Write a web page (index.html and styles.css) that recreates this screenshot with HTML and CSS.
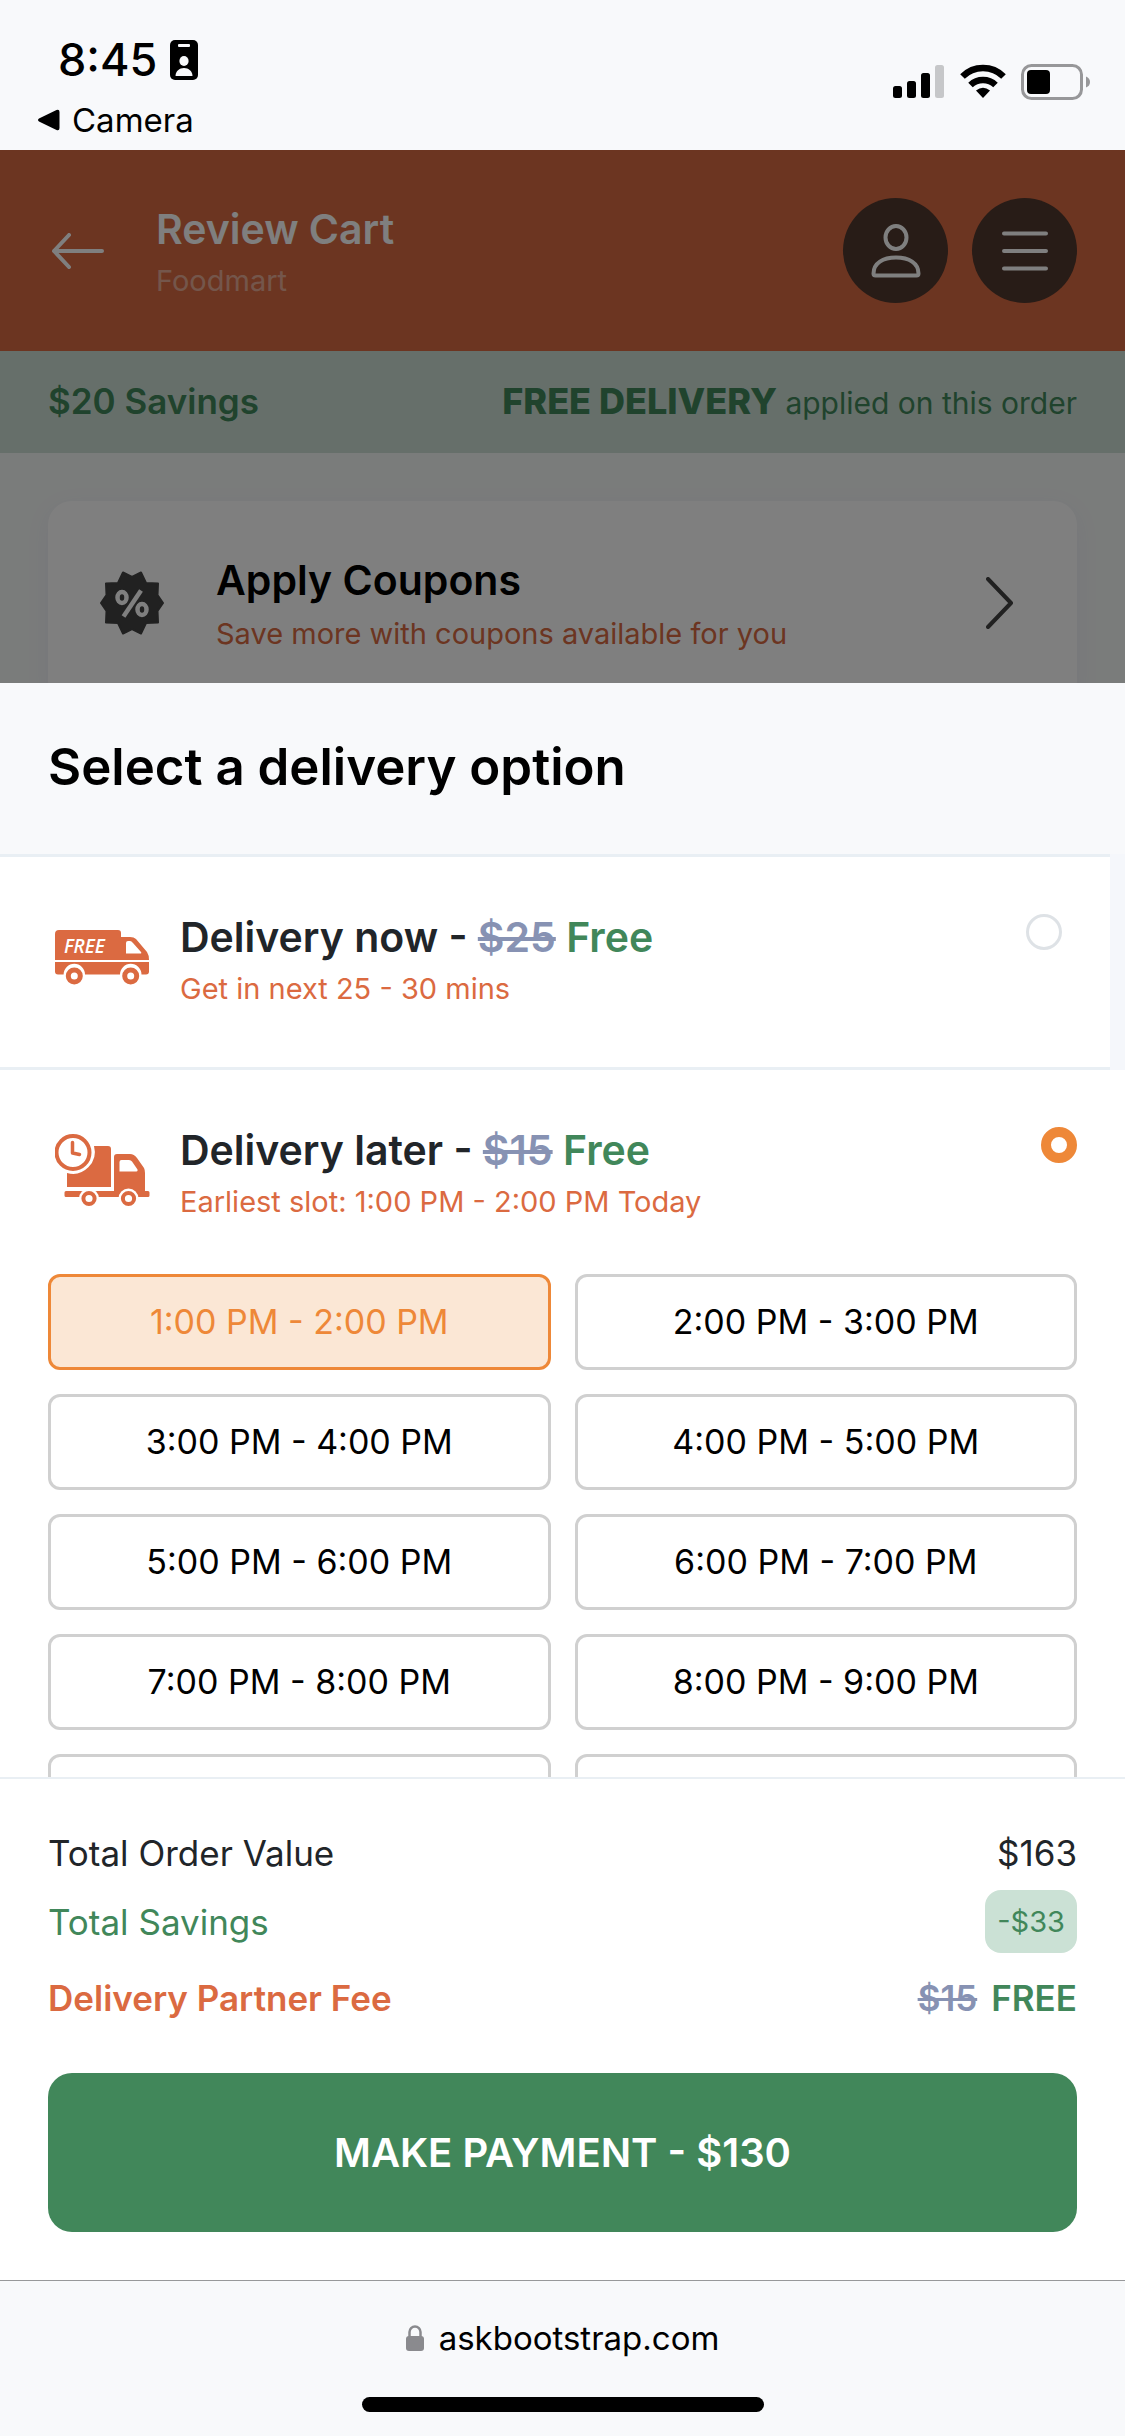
FILE: index.html
```html
<!DOCTYPE html>
<html lang="en">
<head>
<meta charset="utf-8">
<meta name="viewport" content="width=device-width, initial-scale=1">
<title>Review Cart</title>
<link rel="stylesheet" href="styles.css">
</head>
<body>
<div class="screen">
  <div class="status">
    <div class="status-left">
      <div class="clock">8:45
        <svg width="28" height="40" viewBox="0 0 28 40" aria-hidden="true"><rect width="28" height="40" rx="5"/><rect x="8" y="4" width="12" height="3" rx="1" fill="#f8f9fb"/><ellipse cx="14" cy="21" rx="4.6" ry="5" fill="#f8f9fb"/><path d="M5.500 36c0-5 4-8 8.500-8s8.500 3 8.500 8z" fill="#f8f9fb"/></svg>
      </div>
      <a class="back-app" href="#">
        <svg width="22" height="22" viewBox="0 0 22 22" aria-hidden="true"><path d="M1 9.500 18.500 1Q21.500 0 21.500 3V19Q21.500 22 18.500 21L1 12.500Q-1 11 1 9.500z"/></svg>
        Camera
      </a>
    </div>
    <div class="status-right">
      <svg width="52" height="34" viewBox="0 0 52 34" aria-hidden="true"><rect x="0" y="22" width="9" height="12" rx="2.500"/><rect x="14" y="17" width="9" height="17" rx="2.500"/><rect x="28" y="9" width="9" height="25" rx="2.500"/><rect x="42" y="1" width="9" height="33" rx="2.500" fill="#c6c7c9"/></svg>
      <svg width="46" height="34" viewBox="0 0 46 34" aria-hidden="true"><g fill="none" stroke="#000" stroke-width="6.500"><path d="M2.500 12.500a29 29 0 0 1 41 0"/><path d="M10.500 21a18 18 0 0 1 25 0"/></g><path d="M23 34 16 26.500q7-5.500 14 0z"/></svg>
      <svg width="70" height="36" viewBox="0 0 70 36" aria-hidden="true"><rect x="1.500" y="1.500" width="59" height="33" rx="9" fill="none" stroke="#979799" stroke-width="3"/><rect x="6" y="6" width="23" height="24" rx="4"/><path d="M65 12.500q4 1.500 4 5.500t-4 5.500z" fill="#979799"/></svg>
    </div>
  </div>

  <div class="viewport">
    <div class="page">
      <header class="header">
        <a class="back" href="#" aria-label="Back"><svg width="54" height="36" viewBox="0 0 54 36" fill="none" stroke="#fff" stroke-width="4" stroke-linecap="round" stroke-linejoin="round" aria-hidden="true"><path d="M51 18H3M18 2 3 18l15 16"/></svg></a>
        <div class="heading">
          <h1>Review Cart</h1>
          <p>Foodmart</p>
        </div>
        <button class="round" aria-label="Account"><svg width="50" height="54" viewBox="0 0 50 54" fill="none" stroke="#fff" stroke-width="4" stroke-linejoin="round" aria-hidden="true"><ellipse cx="25" cy="13.500" rx="10.500" ry="11.500"/><path d="M2.500 49.500C2.500 39 12 33.500 25 33.500s22.500 5.500 22.500 16q0 2-2 2h-41q-2 0-2-2z"/></svg></button>
        <button class="round" aria-label="Menu"><svg width="46" height="40" viewBox="0 0 46 40" stroke="#fff" stroke-width="4" stroke-linecap="round" aria-hidden="true"><path d="M2 2.500h42M2 20h42M2 37.500h42"/></svg></button>
      </header>
      <div class="savings">
        <span class="saved">$20 Savings</span>
        <span class="applied"><b>FREE DELIVERY</b> applied on this order</span>
      </div>
      <main class="cart">
        <a class="coupon" href="#">
          <svg class="seal" width="64" height="64" viewBox="0 0 64 64" aria-hidden="true"><path d="M32 6 41 1.500 46 12 58 12.500 57.500 24 63 32 57.500 40 58 51.500 46 52 41 62.500 32 58 23 62.500 18 52 6 51.500 6.500 40 1 32 6.500 24 6 12.500 18 12 23 1.500z" fill="#424242" stroke="#424242" stroke-width="2" stroke-linejoin="round"/><g fill="none" stroke="#fff" stroke-width="4.500"><ellipse cx="22" cy="26.500" rx="4.500" ry="5.500"/><ellipse cx="42" cy="38.500" rx="4.500" ry="5.500"/><path d="M41 19.500 23.500 45.500" stroke-width="4.500"/></g></svg>
          <span class="coupon-text"><strong>Apply Coupons</strong><span>Save more with coupons available for you</span></span>
          <svg width="28" height="52" viewBox="0 0 28 52" fill="none" stroke="#424242" stroke-width="4" stroke-linecap="round" stroke-linejoin="round" aria-hidden="true"><path d="M2 2l23 24L2 50"/></svg>
        </a>
      </main>
    </div>

    <div class="overlay">
      <section class="sheet" role="dialog" aria-labelledby="sheet-title">
        <h2 id="sheet-title">Select a delivery option</h2>
        <div class="options">
          <label class="option option-now">
            <svg class="truck" width="96" height="56" viewBox="0 0 96 56" aria-hidden="true"><path d="M4 0H63q3 0 3 3V7H75q4 0 6 2L92 22q2 3 2 8H0V4q0-4 4-4z" fill="#db6a41"/><path d="M71 13q0-2 2-2h2q1.500 0 3 2l8 9q1 1.500-1 1.500H71z" fill="#fff"/><path d="M0 32H94V41.500q0 3-3 3H86.500A10.700 10.700 0 0 0 65 44.500H30A10.700 10.700 0 0 0 8.600 44.500H3q-3 0-3-3z" fill="#db6a41"/><g fill="none" stroke="#db6a41" stroke-width="5"><circle cx="19.300" cy="46" r="6"/><circle cx="75.700" cy="46" r="6"/></g><text class="truck-label" x="9" y="23">FREE</text></svg>
            <span class="option-text"><span class="option-title">Delivery now - <del>$25</del> <span class="green">Free</span></span><span class="note">Get in next 25 - 30 mins</span></span>
            <input type="radio" name="delivery">
          </label>
          <div class="later">
            <label class="option">
              <svg class="truck" width="96" height="74" viewBox="0 0 96 74" fill="#db6a41" aria-hidden="true"><circle cx="18" cy="18.500" r="16.500" fill="none" stroke="#db6a41" stroke-width="4"/><path d="M17.500 8.500V19l7 1.500" fill="none" stroke="#db6a41" stroke-width="3.500" stroke-linecap="round" stroke-linejoin="round"/><path d="M39 12H53q3 0 3 3V53H12V39A22 22 0 0 0 39 12zM59 23q0-3 3-3h13q4 0 7 4l7 10q1 2 1 5V57h3q1.500 0 1.500 1.500v3q0 1.500-1.500 1.500H11q-1.500 0-1.500-1.500v-3q0-1.500 1.500-1.500H59z"/><path d="M64.500 28q0-2 2-2H74q2 0 3 1.500l5.500 8q.500 2-1 2H64.500z" fill="#fff"/><g fill="#fff"><circle cx="34" cy="64.500" r="10"/><circle cx="73.500" cy="64.500" r="10"/></g><g fill="none" stroke="#db6a41" stroke-width="4"><circle cx="34" cy="64.500" r="5.600"/><circle cx="73.500" cy="64.500" r="5.600"/></g></svg>
              <span class="option-text"><span class="option-title">Delivery later - <del>$15</del> <span class="green">Free</span></span><span class="note">Earliest slot: 1:00 PM - 2:00 PM Today</span></span>
              <input type="radio" name="delivery" checked>
            </label>
            <div class="slots">
              <button class="slot selected">1:00 PM - 2:00 PM</button>
              <button class="slot">2:00 PM - 3:00 PM</button>
              <button class="slot">3:00 PM - 4:00 PM</button>
              <button class="slot">4:00 PM - 5:00 PM</button>
              <button class="slot">5:00 PM - 6:00 PM</button>
              <button class="slot">6:00 PM - 7:00 PM</button>
              <button class="slot">7:00 PM - 8:00 PM</button>
              <button class="slot">8:00 PM - 9:00 PM</button>
              <button class="slot" aria-label="9:00 PM - 10:00 PM"></button>
              <button class="slot" aria-label="10:00 PM - 11:00 PM"></button>
            </div>
          </div>
        </div>
        <footer class="totals">
          <div class="row"><span>Total Order Value</span><span>$163</span></div>
          <div class="row green"><span>Total Savings</span><span class="badge">-$33</span></div>
          <div class="row fee"><span>Delivery Partner Fee</span><span class="fee-value"><del>$15</del><span class="green">FREE</span></span></div>
          <button class="pay">MAKE PAYMENT - $130</button>
        </footer>
      </section>
    </div>
  </div>

  <div class="browser">
    <div class="address"><svg width="18" height="26" viewBox="0 0 18 26" aria-hidden="true"><rect y="11" width="18" height="15" rx="3" fill="#8a8a8e"/><path d="M3.500 12V7a5.500 5.500 0 0 1 11 0v5" fill="none" stroke="#8a8a8e" stroke-width="2.500"/></svg>askbootstrap.com</div>
    <div class="home"></div>
  </div>
</div>
</body>
</html>
```
FILE: styles.css
```css
* { box-sizing: border-box; }
body {
  margin: 0;
  font-family: Inter, "Liberation Sans", sans-serif;
  color: #212529;
  background: #f8f9fb;
}
h1, h2, p { margin: 0; font-weight: 600; }
a { color: inherit; text-decoration: none; }
button { font: inherit; color: inherit; border: 0; padding: 0; }
svg { flex: none; }
.green { color: #41875a; }
del { color: #8792b3; }

.screen { display: flex; flex-direction: column; height: 100vh; }

.status {
  display: flex;
  justify-content: space-between;
  height: 150px;
  padding: 35px 34px 0 38px;
  color: #000;
}
.clock {
  display: flex;
  align-items: center;
  gap: 13px;
  padding-left: 20px;
  font-size: 45px;
  line-height: 50px;
  font-weight: 500;
}
.back-app {
  display: flex;
  align-items: center;
  gap: 12px;
  margin-top: 15px;
  font-size: 33px;
  line-height: 40px;
}
.status-right { display: flex; gap: 15px; padding-top: 29px; }

.viewport { position: relative; flex: 1; min-height: 0; overflow: hidden; }
.page { background: #f5f8f6; height: 100%; }
.header {
  display: flex;
  align-items: center;
  gap: 24px;
  height: 201px;
  padding: 0 48px;
  color: #fff;
  background: #d86a42;
}
.back { display: flex; width: 84px; padding-left: 3px; }
.heading { flex: 1; padding-top: 4px; }
.heading h1 { font-size: 41px; line-height: 52px; }
.heading p { font-size: 29px; line-height: 44px; margin-top: 4px; font-weight: 400; opacity: .45; }
.round {
  display: flex;
  align-items: center;
  justify-content: center;
  width: 105px;
  height: 105px;
  border-radius: 50%;
  background: #50382e;
}
.savings {
  display: flex;
  align-items: center;
  justify-content: space-between;
  height: 102px;
  padding: 0 48px 2px;
  color: #41875a;
  background: #ccdfd4;
}
.saved { font-size: 35px; font-weight: 600; }
.applied { font-size: 30px; }
.applied b { font-size: 36px; font-weight: 800; }
.cart { padding: 48px; }
.coupon {
  display: flex;
  align-items: center;
  height: 204px;
  padding: 0 63px 0 52px;
  border-radius: 24px;
  background: #fff;
  box-shadow: 0 6px 24px #ededf6;
}
.coupon-text { display: grid; flex: 1; margin-left: 52px; padding-top: 2px; font-size: 29px; line-height: 48px; color: #d86a42; }
.coupon-text strong { font-size: 41px; line-height: 60px; font-weight: 600; color: #000; }

.overlay {
  position: absolute;
  inset: 0;
  display: flex;
  padding-top: 533px;
  background: rgba(0, 0, 0, .5);
}
.sheet { flex: 1; display: flex; flex-direction: column; min-width: 0; background: #f8f9fb; }
.sheet h2 {
  padding: 54px 48px 57px;
  font-size: 51px;
  line-height: 60px;
  color: #000;
}
.options { flex: 1; min-height: 0; overflow: hidden; background: #f5f7fb; }
.option { display: flex; align-items: flex-start; }
.option-now {
  height: 216px;
  margin-right: 15px;
  padding: 54px 48px 0;
  border-top: 3px solid #e9eff4;
  border-bottom: 3px solid #e9eff4;
  background: #fff;
}
.truck { margin: 19px 29px 0 7px; }
.later .truck { margin-top: 10px; }
.truck-label { font: italic 600 19px "Open Sans", sans-serif; fill: #fff; }
.option-text { display: grid; flex: 1; }
.option-title { font-size: 41px; line-height: 52px; font-weight: 600; }
.note { font-size: 29px; line-height: 44px; margin-top: 4px; color: #db6a41; }
.option input {
  appearance: none;
  width: 36px;
  height: 36px;
  margin: 3px 0 0;
  border: 3px solid #dee2e6;
  border-radius: 50%;
  background: #fff;
}
.option input:checked { border: 10px solid #ee8838; }
.later { padding: 54px 48px; background: #fff; }
.slots {
  display: grid;
  grid-template-columns: 1fr 1fr;
  gap: 24px;
  margin-top: 50px;
}
.slot {
  height: 96px;
  padding-bottom: 2px;
  border: 3px solid #d0d0d0;
  border-radius: 12px;
  font-size: 34px;
  color: #000;
  background: #fff;
}
.slot.selected { color: #ee8838; border-color: #ee8838; background: #fbe7d5; }

.totals { padding: 46px 48px 48px; border-top: 2px solid #e9eff4; background: #fff; }
.row {
  display: flex;
  align-items: center;
  justify-content: space-between;
  height: 63px;
  font-size: 35px;
}
.row:first-child { height: 56px; margin-bottom: 9px; }
.badge { padding: 0 12px; border-radius: 16px; font-size: 29px; line-height: 63px; background: #cbe1d5; }
.row.fee { height: 54px; margin: 18px 0 48px; font-weight: 600; color: #db6a41; }
.fee-value { display: flex; gap: 14px; }
.pay {
  width: 100%;
  height: 159px;
  border-radius: 24px;
  font-size: 40px;
  font-weight: 600;
  color: #fff;
  background: #41875a;
}

.browser {
  display: flex;
  flex-direction: column;
  align-items: center;
  justify-content: space-between;
  height: 156px;
  padding: 35px 0 24px;
  border-top: 1px solid #97989a;
  color: #000;
}
.address { display: flex; align-items: center; gap: 15px; font-size: 33px; line-height: 44px; }
.home { width: 402px; height: 15px; border-radius: 8px; background: #000; }
```
